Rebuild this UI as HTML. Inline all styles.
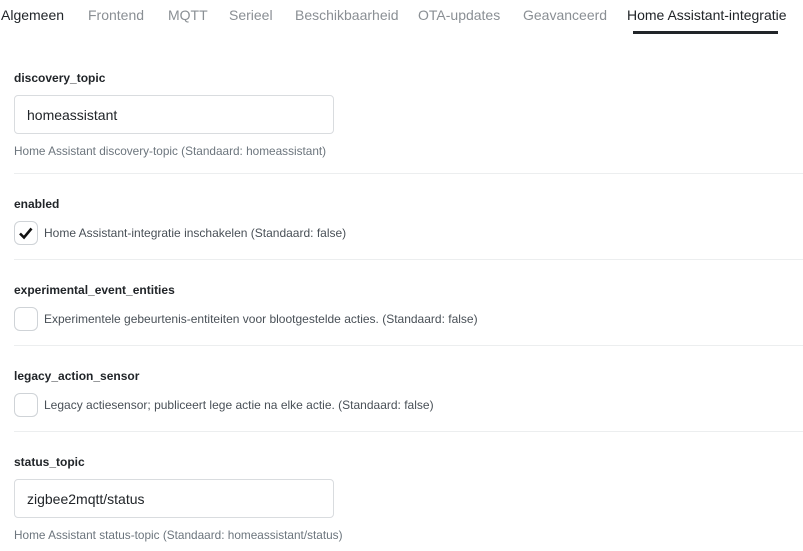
<html><head><style>
body{margin:0;width:803px;height:551px;background:#fff;font-family:"Liberation Sans",sans-serif;position:relative;overflow:hidden;color:#212529}
.t{position:absolute;top:7px;font-size:14px;color:#8a8f94;white-space:nowrap}
.a{color:#212529}
.l{position:absolute;left:14px;font-size:12px;font-weight:bold;color:#212529}
.in{position:absolute;left:14px;width:320px;height:39px;border:1px solid #d9dcdf;border-radius:4px;box-sizing:border-box;font-size:14px;padding:11px 12px;line-height:16px}
.h{position:absolute;left:14px;font-size:11.8px;color:#6c757d;white-space:nowrap}
.hr{position:absolute;left:14px;right:0;border-top:1px solid #eceeef}
.cb{position:absolute;left:14px;width:24px;height:24px;border:1px solid #cfd3d7;border-radius:6px;box-sizing:border-box}
.ct{position:absolute;left:44px;font-size:12px;color:#495057;white-space:nowrap}
</style></head><body>
<div class="t a" style="left:1px">Algemeen</div>
<div class="t" style="left:88px">Frontend</div>
<div class="t" style="left:168px">MQTT</div>
<div class="t" style="left:229px">Serieel</div>
<div class="t" style="left:295px">Beschikbaarheid</div>
<div class="t" style="left:418px">OTA-updates</div>
<div class="t" style="left:523px">Geavanceerd</div>
<div class="t a" style="left:627px">Home Assistant-integratie</div>
<div style="position:absolute;left:633px;top:31px;width:145px;height:3px;background:#212529"></div>

<div class="l" style="top:71px">discovery_topic</div>
<div class="in" style="top:95px">homeassistant</div>
<div class="h" style="top:144px">Home Assistant discovery-topic (Standaard: homeassistant)</div>
<div class="hr" style="top:173px"></div>

<div class="l" style="top:197px">enabled</div>
<div class="cb" style="top:221px"><svg width="22" height="22" viewBox="0 0 22 22"><path d="M5 11.5l4 4 7.5-9" stroke="#111" stroke-width="2.6" fill="none"/></svg></div>
<div class="ct" style="top:226px">Home Assistant-integratie inschakelen (Standaard: false)</div>
<div class="hr" style="top:259px"></div>

<div class="l" style="top:283px">experimental_event_entities</div>
<div class="cb" style="top:307px"></div>
<div class="ct" style="top:312px">Experimentele gebeurtenis-entiteiten voor blootgestelde acties. (Standaard: false)</div>
<div class="hr" style="top:345px"></div>

<div class="l" style="top:369px">legacy_action_sensor</div>
<div class="cb" style="top:393px"></div>
<div class="ct" style="top:398px">Legacy actiesensor; publiceert lege actie na elke actie. (Standaard: false)</div>
<div class="hr" style="top:431px"></div>

<div class="l" style="top:455px">status_topic</div>
<div class="in" style="top:479px">zigbee2mqtt/status</div>
<div class="h" style="top:528px">Home Assistant status-topic (Standaard: homeassistant/status)</div>
</body></html>
